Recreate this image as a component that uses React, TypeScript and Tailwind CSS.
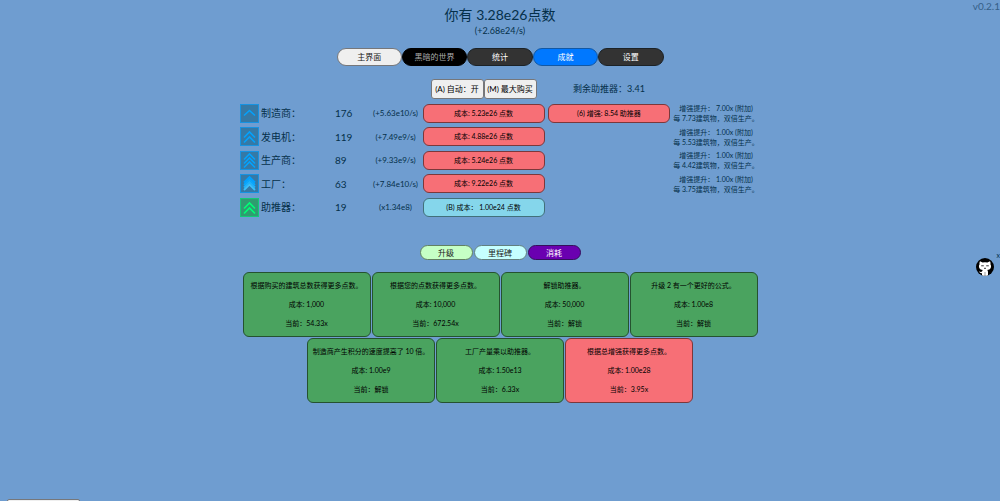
import type { ReactNode } from "react";

type Building = {
  name: string;
  level: number;
  count: number;
  rate: string;
  cost: string;
  affordable?: boolean;
  boost?: string;
  note?: [string, string];
};

const buildings: Building[] = [
  { name: "制造商：", level: 1, count: 176, rate: "(+5.63e10/s)", cost: "成本: 5.23e26 点数", boost: "(6) 增强: 8.54 助推器", note: ["增强提升： 7.00x (附加)", "每 7.73建筑物，双倍生产。"] },
  { name: "发电机：", level: 2, count: 119, rate: "(+7.49e9/s)", cost: "成本: 4.88e26 点数", note: ["增强提升： 1.00x (附加)", "每 5.53建筑物，双倍生产。"] },
  { name: "生产商：", level: 3, count: 89, rate: "(+9.33e9/s)", cost: "成本: 5.24e26 点数", note: ["增强提升： 1.00x (附加)", "每 4.42建筑物，双倍生产。"] },
  { name: "工厂：", level: 4, count: 63, rate: "(+7.84e10/s)", cost: "成本: 9.22e26 点数", note: ["增强提升： 1.00x (附加)", "每 3.75建筑物，双倍生产。"] },
  { name: "助推器：", level: 0, count: 19, rate: "(x1.34e8)", cost: "(B) 成本： 1.00e24 点数", affordable: true },
];

const upgrades = [
  { text: "根据购买的建筑总数获得更多点数。", cost: "1,000", now: "54.33x", owned: true },
  { text: "根据您的点数获得更多点数。", cost: "10,000", now: "672.54x", owned: true },
  { text: "解锁助推器。", cost: "50,000", now: "解锁", owned: true },
  { text: "升级 2 有一个更好的公式。", cost: "1.00e8", now: "解锁", owned: true },
  { text: "制造商产生积分的速度提高了 10 倍。", cost: "1.00e9", now: "解锁", owned: true },
  { text: "工厂产量乘以助推器。", cost: "1.50e13", now: "6.33x", owned: true },
  { text: "根据总增强获得更多点数。", cost: "1.00e28", now: "3.95x", owned: false },
];

const tabs = [
  { label: "主界面", style: "bg-[#efefef] text-[#222] border-[#76777a]" },
  { label: "黑暗的世界", style: "bg-black text-[#aaa] border-black" },
  { label: "统计", style: "bg-[#333] text-white border-[#1c2226]" },
  { label: "成就", style: "bg-[#0078ff] text-white border-[#1258a4]" },
  { label: "设置", style: "bg-[#333] text-white border-[#1c2226]" },
];

const subTabs = [
  { label: "升级", style: "bg-[#c5ffc5] text-[#222] border-[#628062]" },
  { label: "里程碑", style: "bg-[#c5ffff] text-[#222] border-[#628080]" },
  { label: "消耗", style: "bg-[#6a00b0] text-white border-[#35105c]" },
];

function LevelIcon({ level }: { level: number }) {
  const paths: Record<number, string[]> = {
    0: ["M4 10.5 9.5 5 15 10.5", "M4 15.5 9.5 10 15 15.5"],
    1: ["M4 11.5 9.5 6.5 15 11.5"],
    2: ["M4 10.5 9.5 5 15 10.5", "M4 15.5 9.5 10 15 15.5"],
    3: ["M4 8.5 9.5 3 15 8.5", "M4 12.5 9.5 7 15 12.5", "M4 16.5 9.5 11 15 16.5"],
    4: ["M4 8.5 9.5 3 15 8.5", "M4 11 9.5 5.5 15 11", "M4 13.5 9.5 8 15 13.5", "M4 16 9.5 10.5 15 16"],
  };
  const fourth = ["#00a0ff", "#08a8ff", "#1cb2ff", "#3cc0fa"];
  const green = level === 0;
  return (
    <svg viewBox="0 0 19 19" className="size-[19px] shrink-0" aria-hidden="true">
      <rect x="0.5" y="0.5" width="18" height="18" fill={green ? "#2f9c70" : "#3579a6"} stroke={green ? "#12c978" : "#1793e2"} />
      {paths[level].map((d, i) => (
        <path key={d} d={d} fill="none" strokeWidth={level === 4 ? 1.8 : 1.6} stroke={green ? "#00ff78" : level === 4 ? fourth[i] : "#05a2fc"} />
      ))}
    </svg>
  );
}

function WideButton({ children, affordable }: { children: ReactNode; affordable?: boolean }) {
  return (
    <button
      className={`mx-auto block h-[19px] w-[122px] rounded-md border text-[7px] leading-none text-black ${
        affordable ? "border-[#42707a] bg-[#85d6eb]" : "border-[#7b383b] bg-[#f76f76]"
      }`}
    >
      {children}
    </button>
  );
}

export default function App() {
  return (
    <div className="relative min-h-screen overflow-hidden bg-[#6f9dd0] font-['Lato','Noto_Sans_CJK_SC',sans-serif] whitespace-nowrap text-[#05304a]">
      <span className="absolute top-0 right-0 text-[10px] leading-3 text-[#365f88]">v0.2.1</span>

      <header className="flex flex-col items-center pt-1 text-center">
        <h1 className="text-sm leading-[22px]">你有 3.28e26点数</h1>
        <p className="text-[9px] leading-[10px]">(+2.68e24/s)</p>
        <nav className="mt-3 flex w-[327px]">
          {tabs.map((t) => (
            <button key={t.label} className={`h-[18px] flex-1 rounded-full border text-[8px] leading-none ${t.style}`}>
              {t.label}
            </button>
          ))}
        </nav>
      </header>

      <main className="flex flex-col items-center">
        <table className="mt-[11px] w-[520px] table-fixed border-collapse [&_td]:p-0 [&_th]:p-0 [&_th]:font-normal">
          <colgroup>
            <col className="w-[95px]" />
            <col className="w-[35px]" />
            <col className="w-[51px]" />
            <col className="w-[125px]" />
            <col className="w-[126px]" />
            <col className="w-[88px]" />
          </colgroup>
          <thead>
            <tr className="h-6">
              <td colSpan={3} />
              <td>
                <div className="flex justify-center">
                  <button className="h-5 w-[53px] rounded-[3px] border border-[#76777a] bg-[#efefef] text-[8px] leading-none text-black">(A) 自动：开</button>
                  <button className="h-5 w-[53px] rounded-[3px] border border-[#76777a] bg-[#efefef] text-[8px] leading-none text-black">(M) 最大购买</button>
                </div>
              </td>
              <td className="text-center text-[9px] leading-3">剩余助推器：3.41</td>
              <td />
            </tr>
          </thead>
          <tbody className="text-[10px]">
            {buildings.map((b) => (
              <tr key={b.name} className="h-6 even:h-[23px]">
                <th scope="row" className="text-left">
                  <span className="flex items-center gap-0.5 leading-3">
                    <LevelIcon level={b.level} />
                    {b.name}
                  </span>
                </th>
                <td className="leading-3">{b.count}</td>
                <td className="text-center text-[8px] leading-3">{b.rate}</td>
                <td>
                  <WideButton affordable={b.affordable}>{b.cost}</WideButton>
                </td>
                <td>{b.boost && <WideButton>{b.boost}</WideButton>}</td>
                <td className="text-center text-[7px] leading-[10px]">
                  {b.note?.map((line) => (
                    <div key={line}>{line}</div>
                  ))}
                </td>
              </tr>
            ))}
          </tbody>
        </table>

        <nav className="mt-[26px] flex w-[161px] gap-px">
          {subTabs.map((t) => (
            <button key={t.label} className={`h-[15px] flex-1 rounded-full border text-[8px] leading-none ${t.style}`}>
              {t.label}
            </button>
          ))}
        </nav>

        <section className="mt-3 flex max-w-[520px] flex-wrap justify-center gap-px">
          {upgrades.map((u) => (
            <button
              key={u.text}
              className={`flex h-[65px] w-32 flex-col items-center justify-center gap-[9px] rounded-md border pb-0.5 text-[7px] leading-[10px] text-black ${
                u.owned ? "border-[#25522f] bg-[#4aa35f]" : "border-[#7b383b] bg-[#f76f76]"
              }`}
            >
              <span>{u.text}</span>
              <span>成本: {u.cost}</span>
              <span>当前：{u.now}</span>
            </button>
          ))}
        </section>
      </main>

      <span className="absolute top-[249px] right-0 text-[7px] leading-3">x</span>
      <a href="#github" aria-label="GitHub" className="absolute top-[258px] right-[6px]">
        <svg viewBox="0 0 18 18" className="size-[18px]">
          <circle cx="9" cy="9" r="9" fill="#000" />
          <path d="M4 3.2 6.6 4.6Q9 4 11.4 4.6L14 3.2Q14.8 4.8 14.4 6.2 15.6 8 14.6 10.2 13.8 11.8 11.2 12.1 12 12.8 12 14V17.3Q9 18.4 6 17.3V15.2Q3.8 15.6 3 13.2 4.8 14.4 6 13.6 6.2 12.6 6.8 12.1 4.2 11.8 3.4 10.2 2.4 8 3.6 6.2 3.2 4.8 4 3.2Z" fill="#fff" />
          <path d="M5.2 7.8H7.8M10.2 7.8H12.8M8 10.3H10" stroke="#222" strokeWidth="0.9" />
          <path d="M9 14V18" stroke="#777" strokeWidth="0.7" />
        </svg>
      </a>
      <button aria-label="更多" className="absolute -bottom-[18px] left-[7px] h-5 w-[73px] rounded-xs border border-[#76777a] bg-[#efefef]" />
    </div>
  );
}
